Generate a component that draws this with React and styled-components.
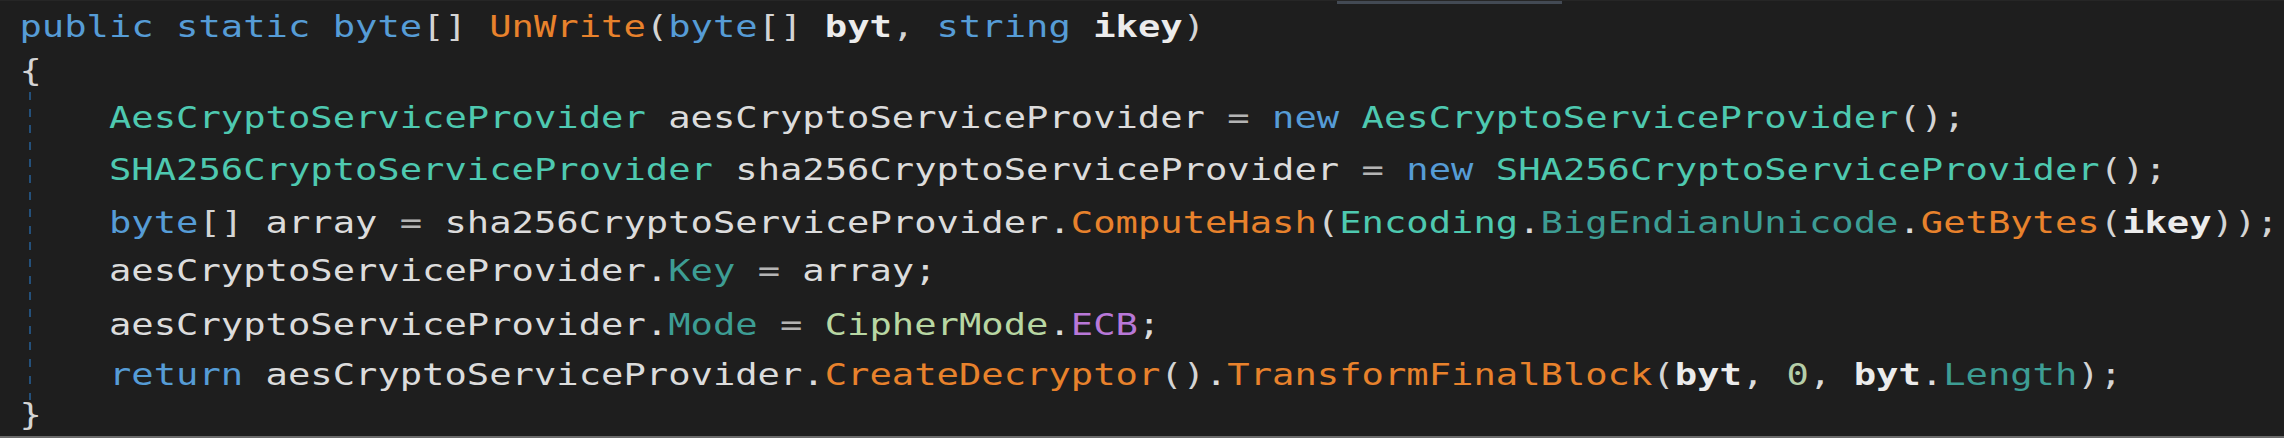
import React from "react"
import styled, { createGlobalStyle } from "styled-components"

const GlobalStyle = createGlobalStyle`
  body {
    margin: 0;
    background: #1e1e1e;
  }
`

const colors = {
  kw: "#569cd6",
  fn: "#e8822c",
  type: "#4ec9b0",
  prop: "#3d9d94",
  enumType: "#b8d7a3",
  enumMember: "#b878d8",
  id: "#dcdcdc",
  param: "#ececec",
  num: "#b5cea8",
  op: "#b4b4b4",
  punc: "#d4d4d4",
}

const Editor = styled.div`
  position: relative;
  width: 2284px;
  height: 438px;
  overflow: hidden;
  box-sizing: border-box;
  background: #1e1e1e;
  border-top: 1px solid #262626;
  border-bottom: 2px solid #6b6b6b;
`

const ScrollThumb = styled.div`
  position: absolute;
  top: 0;
  left: 1337px;
  width: 225px;
  height: 3px;
  background: #434a54;
`

const IndentGuide = styled.div`
  position: absolute;
  left: 29px;
  top: 91px;
  width: 2px;
  height: 308px;
  background: repeating-linear-gradient(
    to bottom,
    #24507a 0 8px,
    transparent 8px 16.7px
  );
`

// the source screenshot is stretched sideways, so the code block is too
const Code = styled.div`
  padding: 2px 0 0 15.75px;
  font-family: "DejaVu Sans Mono", "Liberation Mono", monospace;
  font-size: 30px;
  line-height: 48px;
  white-space: pre;
  color: ${colors.id};
  transform: scaleX(1.2384);
  transform-origin: 0 0;
`

const Row = styled.div`
  height: ${({ $h }) => $h}px;
  padding-left: ${({ $indent }) => ($indent ? "4ch" : "0")};
`

const Tok = styled.span`
  color: ${({ $k }) => colors[$k] || colors.id};
  font-weight: ${({ $k }) => ($k === "param" ? 700 : 400)};
`

const lines = [
  {
    h: 44,
    t: [
      ["public", "kw"], [" "], ["static", "kw"], [" "], ["byte", "kw"], ["[]", "punc"],
      [" "], ["UnWrite", "fn"], ["(", "punc"], ["byte", "kw"], ["[]", "punc"], [" "],
      ["byt", "param"], [", ", "punc"], ["string", "kw"], [" "], ["ikey", "param"], [")", "punc"],
    ],
  },
  { h: 47, t: [["{", "punc"]] },
  {
    h: 52,
    indent: true,
    t: [
      ["AesCryptoServiceProvider", "type"], [" aesCryptoServiceProvider "], ["=", "op"],
      [" "], ["new", "kw"], [" "], ["AesCryptoServiceProvider", "type"], ["();", "punc"],
    ],
  },
  {
    h: 53,
    indent: true,
    t: [
      ["SHA256CryptoServiceProvider", "type"], [" sha256CryptoServiceProvider "], ["=", "op"],
      [" "], ["new", "kw"], [" "], ["SHA256CryptoServiceProvider", "type"], ["();", "punc"],
    ],
  },
  {
    h: 48,
    indent: true,
    t: [
      ["byte", "kw"], ["[]", "punc"], [" array "], ["=", "op"], [" sha256CryptoServiceProvider."],
      ["ComputeHash", "fn"], ["(", "punc"], ["Encoding", "type"], ["."], ["BigEndianUnicode", "prop"],
      ["."], ["GetBytes", "fn"], ["(", "punc"], ["ikey", "param"], ["));", "punc"],
    ],
  },
  {
    h: 54,
    indent: true,
    t: [["aesCryptoServiceProvider."], ["Key", "prop"], [" "], ["=", "op"], [" array;"]],
  },
  {
    h: 50,
    indent: true,
    t: [
      ["aesCryptoServiceProvider."], ["Mode", "prop"], [" "], ["=", "op"], [" "],
      ["CipherMode", "enumType"], ["."], ["ECB", "enumMember"], [";"],
    ],
  },
  {
    h: 40,
    indent: true,
    t: [
      ["return", "kw"], [" aesCryptoServiceProvider."], ["CreateDecryptor", "fn"], ["()", "punc"],
      ["."], ["TransformFinalBlock", "fn"], ["(", "punc"], ["byt", "param"], [", "],
      ["0", "num"], [", "], ["byt", "param"], ["."], ["Length", "prop"], [");", "punc"],
    ],
  },
  { h: 48, t: [["}", "punc"]] },
]

const App = () => {
  return (
    <>
      <GlobalStyle />
      <Editor>
        <ScrollThumb />
        <IndentGuide />
        <Code>
          {lines.map((line, i) => (
            <Row key={i} $h={line.h} $indent={line.indent}>
              {line.t.map(([text, kind], j) => (
                <Tok key={j} $k={kind}>
                  {text}
                </Tok>
              ))}
            </Row>
          ))}
        </Code>
      </Editor>
    </>
  )
}

export default App
